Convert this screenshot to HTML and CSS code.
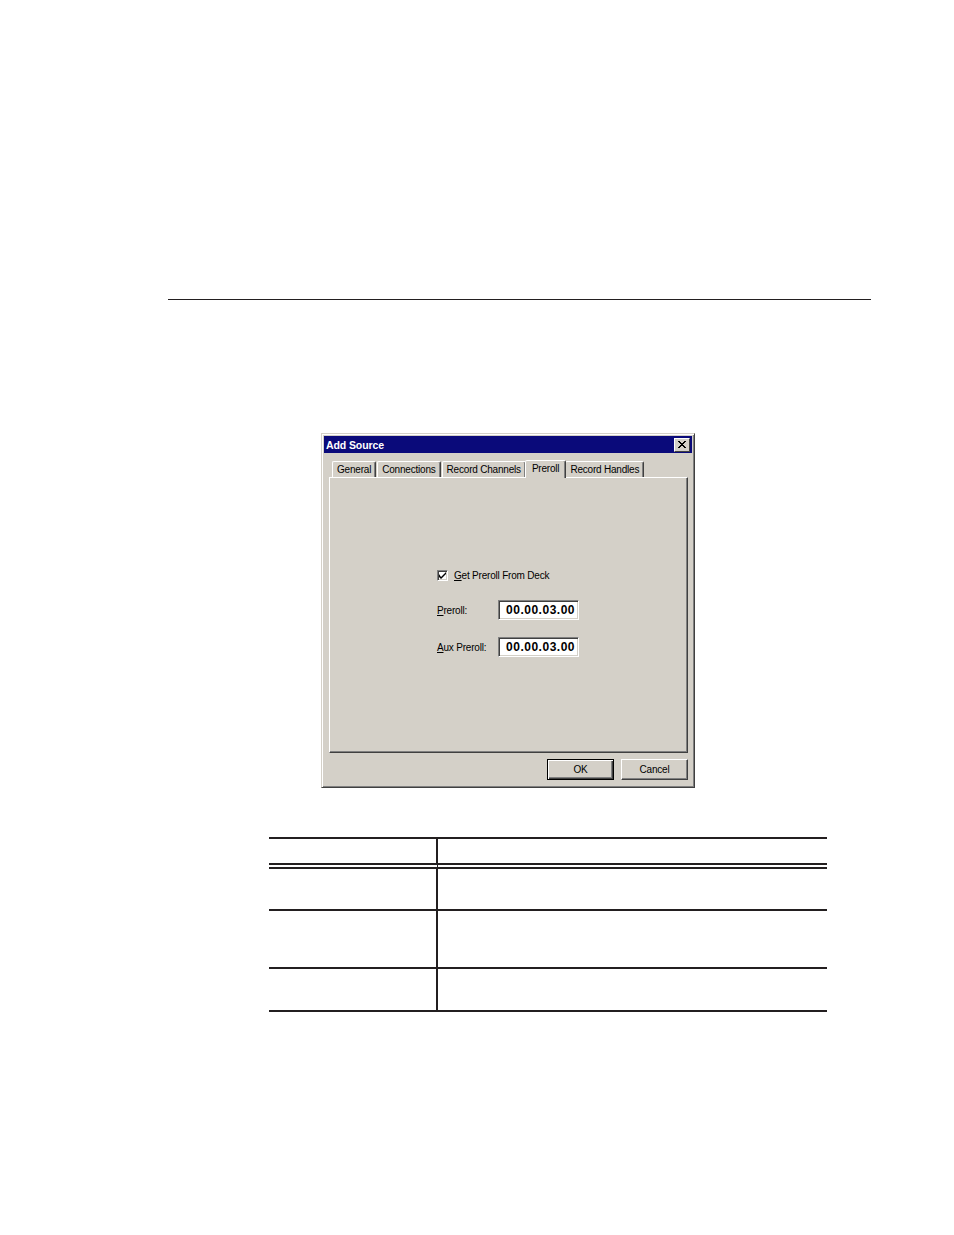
FILE: index.html
```html
<!DOCTYPE html>
<html lang="en">
<head>
  <meta charset="UTF-8" />
  <title>Add Source - Preroll</title>
  <link rel="stylesheet" href="styles.css">
</head>
<body>
  <div class="page">
    <div class="rule"></div>

    <div class="dialog">
      <div class="titlebar">
        <span class="title">Add Source</span>
        <span class="close-btn">
          <svg width="8" height="7" viewBox="0 0 8 7">
            <path d="M0 0h2v1h1v1h2v-1h1v-1h2v1h-1v1h-1v1h-1v1h1v1h1v1h1v1h-2v-1h-1v-1h-2v1h-1v1h-2v-1h1v-1h1v-1h1v-1h-1v-1h-1v-1h-1z" fill="#000"/>
          </svg>
        </span>
      </div>

      <div class="tabs">
        <div class="tab">General</div>
        <div class="tab">Connections</div>
        <div class="tab">Record Channels</div>
        <div class="tab active">Preroll</div>
        <div class="tab">Record Handles</div>
      </div>

      <div class="panel">
        <div class="check-row">
          <span class="checkbox">
            <svg width="7" height="7" viewBox="0 0 7 7">
              <path d="M0 2v3l2 2l5-5v-2l-5 5z" fill="#000"/>
            </svg>
          </span>
          <span><u>G</u>et Preroll From Deck</span>
        </div>
        <div class="field-row">
          <label><u>P</u>reroll:</label>
          <div class="field">00.00.03.00</div>
        </div>
        <div class="field-row">
          <label><u>A</u>ux Preroll:</label>
          <div class="field">00.00.03.00</div>
        </div>
      </div>

      <div class="buttons">
        <div class="btn default"><span>OK</span></div>
        <div class="btn"><span>Cancel</span></div>
      </div>
    </div>

    <table class="params">
      <thead>
        <tr><th></th><th></th></tr>
      </thead>
      <tbody>
        <tr class="r1"><td></td><td></td></tr>
        <tr class="r2"><td></td><td></td></tr>
        <tr class="r3"><td></td><td></td></tr>
      </tbody>
    </table>
  </div>
</body>
</html>
```

FILE: styles.css
```css
body {
  margin: 0;
  background: #fff;
  font-family: "Liberation Sans", Arial, sans-serif;
}
.page {
  padding-top: 299px;
}
.rule {
  margin-left: 168px;
  width: 703px;
  border-top: 1px solid #231f20;
}

/* dialog window */
.dialog {
  box-sizing: border-box;
  margin: 133px 0 0 321px;
  width: 374px;
  height: 355px;
  background: #d4d0c8;
  border: 1px solid;
  border-color: #d4d0c8 #404040 #404040 #d4d0c8;
  box-shadow: inset 1px 1px 0 #fff, inset -1px -1px 0 #808080;
  padding: 2px;
  font-size: 10px;
  letter-spacing: -0.2px;
  color: #000;
}
.titlebar {
  height: 17px;
  background: #0a0a7a;
  display: flex;
  align-items: center;
  justify-content: space-between;
  padding: 0 2px 0 2px;
}
.title {
  color: #fff;
  font-weight: bold;
  font-size: 10.5px;
  letter-spacing: -0.1px;
}
.close-btn {
  width: 14px;
  height: 12px;
  background: #d4d0c8;
  border: 1px solid;
  border-color: #fff #404040 #404040 #fff;
  display: flex;
  align-items: center;
  justify-content: center;
}

/* tab strip */
.tabs {
  display: flex;
  align-items: flex-end;
  height: 19px;
  margin: 5px 0 0 6px;
  padding-left: 2px;
}
.tab {
  height: 15px;
  line-height: 15px;
  padding: 0 4px;
  border: 1px solid;
  border-bottom: none;
  border-color: #fff #404040 transparent #fff;
  box-shadow: inset -1px 0 0 #808080;
  border-radius: 2px 2px 0 0;
  margin-right: 1px;
  white-space: nowrap;
}
.tab.active {
  height: 17px;
  line-height: 15px;
  margin: 0 -1px 0 -2px;
  padding: 0 6px;
  position: relative;
  top: 1px;
  background: #d4d0c8;
  z-index: 1;
}

.panel {
  box-sizing: border-box;
  margin-left: 5px;
  width: 359px;
  height: 276px;
  border: 1px solid;
  border-color: #fff #404040 #404040 #fff;
  box-shadow: inset -1px -1px 0 #808080;
  padding: 91px 0 0 107px;
}
.check-row {
  display: flex;
  align-items: center;
  gap: 6px;
  height: 12px;
}
.checkbox {
  width: 9px;
  height: 9px;
  background: #fff;
  border: 1px solid;
  border-color: #808080 #fff #fff #808080;
  box-shadow: inset 1px 1px 0 #404040, inset -1px -1px 0 #d4d0c8;
  display: flex;
  align-items: center;
  justify-content: center;
}
.field-row {
  display: flex;
  align-items: center;
  margin-top: 19px;
  height: 20px;
}
.field-row + .field-row {
  margin-top: 17px;
}
.field-row label {
  width: 61px;
}
.field {
  width: 76px;
  height: 18px;
  line-height: 18px;
  background: #fff;
  border: 1px solid;
  border-color: #808080 #fff #fff #808080;
  box-shadow: inset 1px 1px 0 #404040, inset -1px -1px 0 #d4d0c8;
  font-weight: bold;
  font-size: 12px;
  letter-spacing: 0.5px;
  text-align: right;
  padding-right: 3px;
}

.buttons {
  display: flex;
  justify-content: flex-end;
  gap: 7px;
  margin: 6px 4px 0 0;
}
.btn {
  box-sizing: border-box;
  width: 67px;
  height: 21px;
  line-height: 19px;
  text-align: center;
  border: 1px solid;
  border-color: #fff #404040 #404040 #fff;
  box-shadow: inset -1px -1px 0 #808080;
}
.btn.default {
  border: 1px solid #000;
  box-shadow: inset 1px 1px 0 #fff, inset -1px -1px 0 #404040, inset -2px -2px 0 #808080;
}

/* parameter table */
.params {
  margin: 49px 0 0 269px;
  width: 558px;
  border-collapse: separate;
  border-spacing: 0;
}
.params th, .params td {
  padding: 0;
}
.params th:first-child, .params td:first-child {
  width: 167px;
  border-right: 2px solid #231f20;
}
.params th {
  height: 24px;
  border-top: 2px solid #231f20;
  border-bottom: 6px double #231f20;
}
.params td {
  border-bottom: 2px solid #231f20;
}
.params tr.r1 td {
  height: 40px;
}
.params tr.r2 td {
  height: 56px;
}
.params tr.r3 td {
  height: 41px;
}
```
